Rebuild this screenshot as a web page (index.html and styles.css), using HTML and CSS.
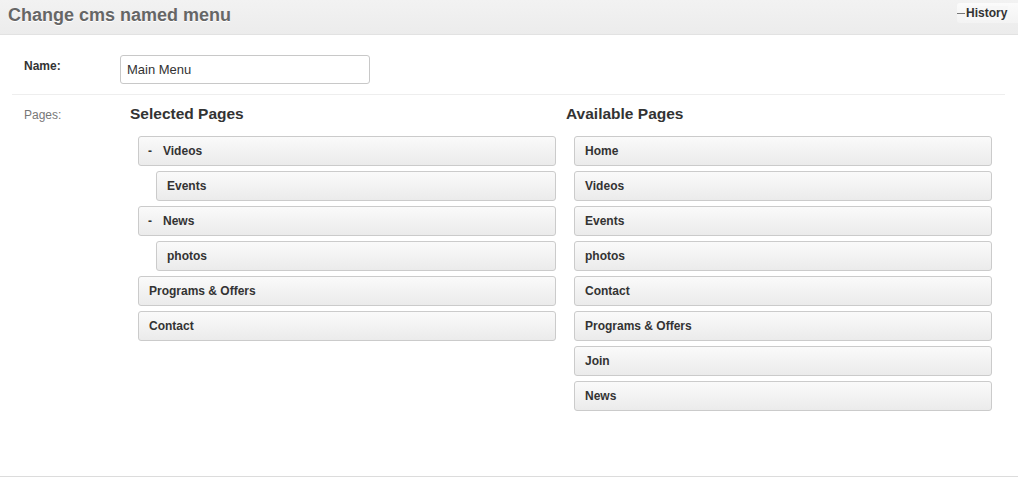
FILE: index.html
```html
<!DOCTYPE html>
<html>
<head>
<meta charset="utf-8">
<link rel="stylesheet" href="styles.css">
<title>Change cms named menu</title>
</head>
<body>
<div class="header">
  <h1 class="title">Change cms named menu</h1>
  <a class="history"><span>History</span></a>
</div>
<div class="content">
  <div class="row row-name">
    <label class="label label-strong">Name:</label>
    <input class="text-input" type="text" value="Main Menu">
  </div>
  <div class="row row-pages">
    <div class="label label-light">Pages:</div>
    <div class="columns">
      <div class="column">
        <h2 class="col-title">Selected Pages</h2>
        <ul class="items">
          <li class="item"><span class="toggle">-</span>Videos</li>
          <li class="item nested">Events</li>
          <li class="item"><span class="toggle">-</span>News</li>
          <li class="item nested">photos</li>
          <li class="item">Programs &amp; Offers</li>
          <li class="item">Contact</li>
        </ul>
      </div>
      <div class="column">
        <h2 class="col-title">Available Pages</h2>
        <ul class="items">
          <li class="item">Home</li>
          <li class="item">Videos</li>
          <li class="item">Events</li>
          <li class="item">photos</li>
          <li class="item">Contact</li>
          <li class="item">Programs &amp; Offers</li>
          <li class="item">Join</li>
          <li class="item">News</li>
        </ul>
      </div>
    </div>
  </div>
</div>
</body>
</html>
```

FILE: styles.css
```css
* { box-sizing: border-box; }
html, body {
  margin: 0;
  padding: 0;
  background: #fff;
  font-family: "Liberation Sans", Arial, Helvetica, sans-serif;
  color: #333;
}
.header {
  height: 35px;
  background: linear-gradient(#f2f2f2, #ececec);
  border-bottom: 1px solid #e2e2e2;
  display: flex;
  align-items: flex-start;
  justify-content: space-between;
}
.title {
  margin: 0;
  padding: 5px 0 0 8px;
  font-size: 18px;
  line-height: 20px;
  font-weight: bold;
  color: #666;
  text-shadow: 0 1px 0 #fff;
}
.history {
  margin-top: 3px;
  width: 61px;
  height: 20px;
  background: linear-gradient(#fbfbfb, #f3f3f3);
  border-radius: 3px 0 0 3px;
  display: flex;
  align-items: center;
  position: relative;
  font-size: 12px;
  font-weight: bold;
  color: #333;
}
.history::before {
  content: "";
  position: absolute;
  left: 0;
  right: 10px;
  top: 10px;
  height: 1px;
  background: #777;
}
.history span {
  position: relative;
  margin-left: 8px;
  padding: 0 1px;
  background: #f7f7f7;
  line-height: 14px;
}
.content {
  height: 442px;
  border-bottom: 1px solid #dcdcdc;
  padding-top: 20px;
}
.row {
  display: flex;
  margin: 0 13px 0 12px;
  padding-left: 12px;
}
.row-name {
  border-bottom: 1px solid #eee;
  padding-bottom: 9px;
  height: 40px;
}
.label {
  font-size: 12px;
  line-height: 14px;
}
.label-strong {
  width: 96px;
  font-weight: bold;
  color: #333;
  padding-top: 4px;
}
.label-light {
  width: 106px;
  color: #777;
  padding-top: 13px;
}
.text-input {
  width: 250px;
  height: 29px;
  border: 1px solid #c8c8c8;
  border-radius: 3px;
  padding: 0 6px;
  font-family: "Liberation Sans", Arial, sans-serif;
  font-size: 13px;
  color: #333;
  outline: none;
}
.columns {
  display: flex;
  gap: 10px;
}
.column {
  width: 426px;
}
.col-title {
  margin: 0;
  padding-top: 10px;
  font-size: 15.5px;
  line-height: 18px;
  font-weight: bold;
  color: #333;
}
.items {
  list-style: none;
  margin: 13px 0 0 8px;
  padding: 0;
  display: flex;
  flex-direction: column;
  gap: 5px;
}
.item {
  height: 30px;
  border: 1px solid #cbcbcb;
  border-radius: 3px;
  background: linear-gradient(#fafafa, #ebebeb);
  padding-left: 10px;
  display: flex;
  align-items: center;
  font-size: 12px;
  font-weight: bold;
  color: #333;
}
.item.nested {
  margin-left: 18px;
}
.toggle {
  width: 15px;
  margin-left: -1px;
  display: inline-block;
}
```
